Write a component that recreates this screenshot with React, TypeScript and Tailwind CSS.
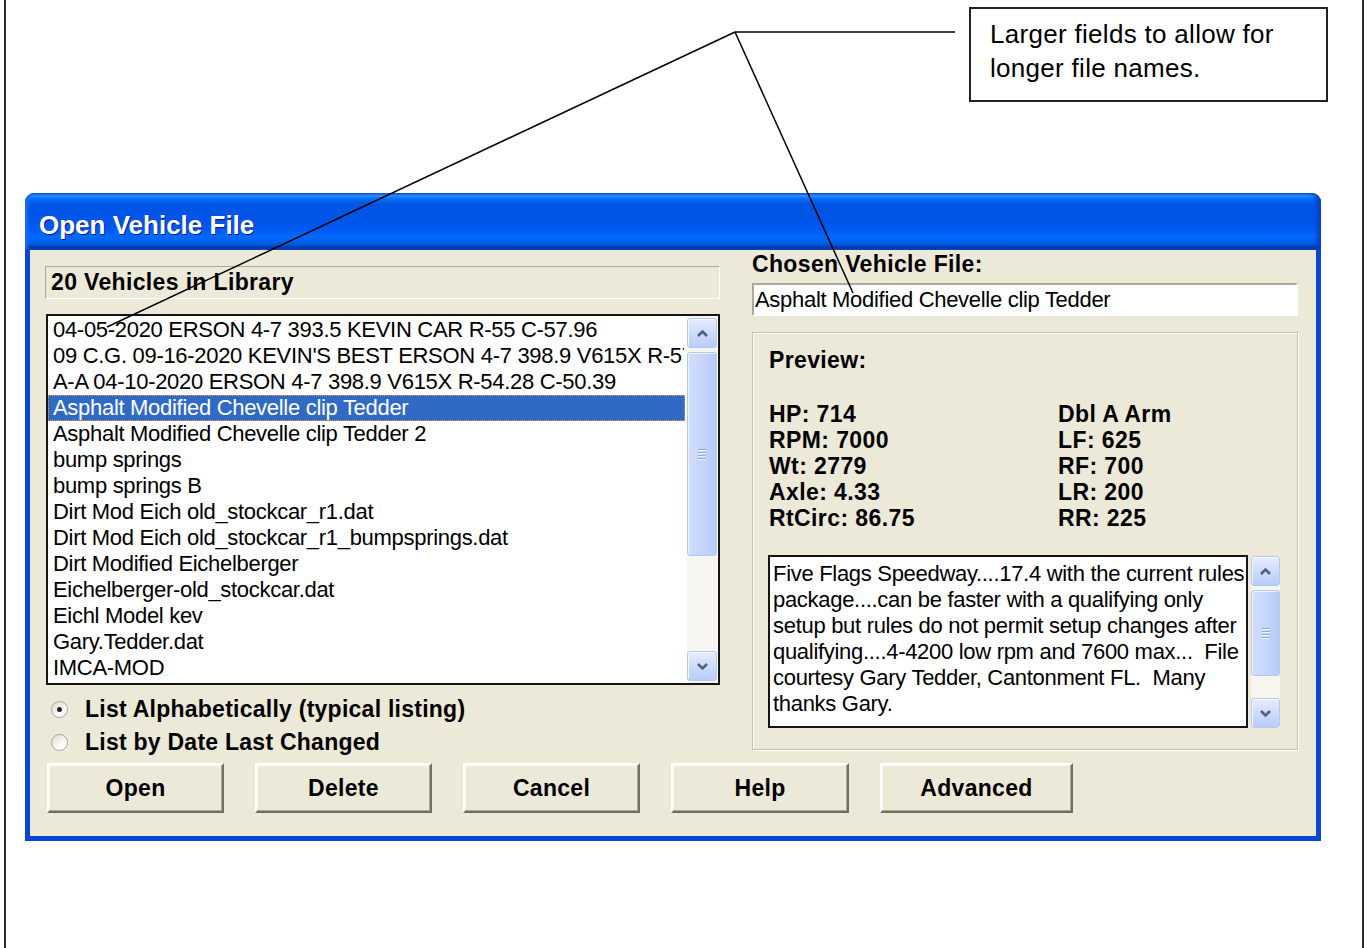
import React from "react";

const files = [
  "04-05-2020 ERSON 4-7 393.5 KEVIN CAR R-55 C-57.96",
  "09 C.G. 09-16-2020 KEVIN'S BEST ERSON 4-7 398.9 V615X R-57",
  "A-A 04-10-2020 ERSON 4-7 398.9 V615X R-54.28 C-50.39",
  "Asphalt Modified Chevelle clip Tedder",
  "Asphalt Modified Chevelle clip Tedder 2",
  "bump springs",
  "bump springs B",
  "Dirt Mod Eich old_stockcar_r1.dat",
  "Dirt Mod Eich old_stockcar_r1_bumpsprings.dat",
  "Dirt Modified Eichelberger",
  "Eichelberger-old_stockcar.dat",
  "Eichl Model kev",
  "Gary.Tedder.dat",
  "IMCA-MOD",
];

const selected = 3;

const specs = [
  ["HP: 714", "Dbl A Arm"],
  ["RPM: 7000", "LF: 625"],
  ["Wt: 2779", "RF: 700"],
  ["Axle: 4.33", "LR: 200"],
  ["RtCirc: 86.75", "RR: 225"],
];

const notes = [
  "Five Flags Speedway....17.4 with the current rules",
  "package....can be faster with a qualifying only",
  "setup but rules do not permit setup changes after",
  "qualifying....4-4200 low rpm and 7600 max...  File",
  "courtesy Gary Tedder, Cantonment FL.  Many",
  "thanks Gary.",
];

const buttons = [
  { label: "Open", w: "w-[177px]" },
  { label: "Delete", w: "w-[177px]" },
  { label: "Cancel", w: "w-[177px]" },
  { label: "Help", w: "w-[178px]" },
  { label: "Advanced", w: "w-[193px]" },
];

const Arrow = ({ dir }: { dir: "up" | "down" }) => (
  <div className="flex h-[30px] shrink-0 items-center justify-center rounded-[3px] border border-[#b4c8f6] bg-[linear-gradient(180deg,#e6edfd_0%,#cbdafc_55%,#b9cdf9_100%)] shadow-[inset_1px_1px_0_#f4f7fe]">
    <svg width="13" height="9" viewBox="0 0 13 9">
      <path
        d={dir === "up" ? "M2 7 6.5 2.5 11 7" : "M2 2 6.5 6.5 11 2"}
        fill="none"
        stroke="#4d6185"
        strokeWidth="2.6"
      />
    </svg>
  </div>
);

const Thumb = ({ className }: { className: string }) => (
  <div
    className={
      "flex flex-col items-center justify-center gap-[2px] rounded-[3px] border border-[#b4c8f6] bg-[linear-gradient(90deg,#d2defd_0%,#c3d4fb_60%,#b6cbf8_100%)] shadow-[inset_1px_1px_0_#eef3fe] " +
      className
    }
  >
    {[0, 1, 2, 3].map((i) => (
      <div key={i} className="h-[1px] w-[8px] bg-[#8eacef] shadow-[0_1px_0_#eef3fe]" />
    ))}
  </div>
);

export default function App() {
  return (
    <div className="relative h-[948px] w-[1368px] overflow-hidden bg-white px-[4px] font-['Liberation_Sans',Arial,sans-serif] text-black">
      <div className="h-full border-x-2 border-[#2a2a2a]">
        {/* callout */}
        <div className="flex justify-end pr-[34px] pt-[7px]">
          <div className="h-[95px] w-[359px] border-2 border-[#222] pl-[19px] pt-[8px] text-[26px] leading-[34px] tracking-[0.3px]">
            <div>Larger fields to allow for</div>
            <div>longer file names.</div>
          </div>
        </div>

        {/* dialog */}
        <div className="ml-[19px] mt-[91px] w-[1296px]">
          <div className="h-[57px] rounded-t-[9px] bg-[linear-gradient(180deg,#0058ee_0%,#3593ff_4%,#288eff_6%,#127dff_8%,#036ffc_10%,#0262ee_14%,#0057e5_20%,#0054e3_24%,#0055eb_56%,#005bf5_66%,#026afe_76%,#0062ef_86%,#0052d6_92%,#0040ab_94%,#003092_100%)] pl-[14px] pt-[20px] shadow-[inset_-4px_0_4px_#0b3ec0,inset_3px_0_3px_#1d6cf0]">
            <div className="text-[26px] font-bold leading-[25px] text-white [text-shadow:1px_1px_0_#0a1883]">
              Open Vehicle File
            </div>
          </div>

          <div className="border-x-[5px] border-b-[5px] border-[#0845d8] bg-[#ece9d8] pb-[23px]">
            <div className="flex pl-[15px]">
              {/* left column */}
              <div className="w-[675px] pt-[16px]">
                <div className="h-[33px] border border-b-white border-l-[#aca899] border-r-white border-t-[#aca899] pl-[5px] text-[23px] font-bold leading-[31px] tracking-[0.35px]">
                  20 Vehicles in Library
                </div>

                <div className="mt-[15px] ml-[1px] flex h-[371px] border-2 border-[#151515] bg-white">
                  <div className="mr-[2px] flex-1 overflow-hidden pt-[1px]">
                    {files.map((f, i) => (
                      <div
                        key={f}
                        className={
                          i === selected
                            ? "h-[26px] overflow-hidden whitespace-nowrap border border-dotted border-[#e9a23b] bg-[#316ac5] pl-[4px] text-[22px] leading-[24px] tracking-[-0.3px] text-white"
                            : "h-[26px] overflow-hidden whitespace-nowrap border border-transparent pl-[4px] text-[22px] leading-[24px] tracking-[-0.3px]"
                        }
                      >
                        {f}
                      </div>
                    ))}
                  </div>
                  <div className="mr-[1px] flex w-[30px] flex-col bg-[#f6f5f0] py-[2px]">
                    <Arrow dir="up" />
                    <Thumb className="mt-[4px] h-[204px]" />
                    <div className="flex-1" />
                    <Arrow dir="down" />
                  </div>
                </div>

                <div className="mt-[8px] pl-[6px] text-[23px] font-bold tracking-[0.25px]">
                  <div className="flex h-[33px] items-center gap-[17px] leading-[33px]">
                    <div className="flex h-[17px] w-[17px] items-center justify-center rounded-full border border-[#a9a698] bg-[linear-gradient(135deg,#dcd9cd_0%,#ffffff_70%)]">
                      <div className="h-[5px] w-[5px] rounded-full bg-[#222]" />
                    </div>
                    <span>List Alphabetically (typical listing)</span>
                  </div>
                  <div className="flex h-[33px] items-center gap-[17px] leading-[33px]">
                    <div className="h-[17px] w-[17px] rounded-full border border-[#a9a698] bg-[linear-gradient(135deg,#dcd9cd_0%,#ffffff_70%)]" />
                    <span>List by Date Last Changed</span>
                  </div>
                </div>
              </div>

              {/* right column */}
              <div className="ml-[32px] w-[546px] pt-[2px]">
                <div className="text-[23px] font-bold leading-[24px] tracking-[0.35px]">Chosen Vehicle File:</div>
                <div className="mt-[7px] h-[33px] overflow-hidden whitespace-nowrap border-2 border-b-white border-l-[#aca899] border-r-white border-t-[#aca899] bg-white pl-[1px] text-[22px] leading-[29px] tracking-[-0.3px]">
                  Asphalt Modified Chevelle clip Tedder
                </div>

                <div className="mt-[16px] h-[418px] border border-[#c5c2b2] px-[15px] pt-[15px] shadow-[inset_1px_1px_0_#ffffff,1px_1px_0_#ffffff]">
                  <div className="pl-[1px] text-[23px] font-bold leading-[24px] tracking-[0.35px]">Preview:</div>
                  <div className="mt-[29px] grid grid-cols-[289px_1fr] pl-[1px] text-[23px] font-bold leading-[26px] tracking-[0.4px]">
                    {specs.map(([a, b]) => (
                      <React.Fragment key={a}>
                        <div>{a}</div>
                        <div>{b}</div>
                      </React.Fragment>
                    ))}
                  </div>

                  <div className="mt-[24px] flex">
                    <div className="h-[173px] w-[480px] overflow-hidden border-2 border-[#151515] bg-white pl-[3px] pt-[4px] text-[22px] leading-[26px] tracking-[-0.3px]">
                      {notes.map((n) => (
                        <div key={n} className="overflow-hidden whitespace-pre">
                          {n}
                        </div>
                      ))}
                    </div>
                    <div className="ml-[3px] mt-[1px] flex h-[172px] w-[29px] flex-col bg-[#f6f5f0]">
                      <Arrow dir="up" />
                      <Thumb className="mt-[4px] h-[86px]" />
                      <div className="flex-1" />
                      <Arrow dir="down" />
                    </div>
                  </div>
                </div>
              </div>
            </div>

            {/* buttons */}
            <div className="mt-[4px] flex gap-[31px] pl-[17px]">
              {buttons.map((b) => (
                <button
                  key={b.label}
                  className={
                    "h-[50px] border-2 border-b-[#716f64] border-l-white border-r-[#716f64] border-t-white bg-[#ece9d8] text-[23px] font-bold tracking-[0.3px] shadow-[inset_-1px_-1px_0_#aca899,inset_1px_1px_0_#f8f7f2] " +
                    b.w
                  }
                >
                  {b.label}
                </button>
              ))}
            </div>
          </div>
        </div>
      </div>

      {/* leader lines from the callout */}
      <svg className="pointer-events-none absolute inset-0" width="1368" height="948">
        <g stroke="#000" strokeWidth="1.5" fill="none">
          <line x1="735" y1="32" x2="955" y2="32" />
          <line x1="735" y1="32" x2="107" y2="327" />
          <line x1="735" y1="32" x2="853" y2="293" />
        </g>
      </svg>
    </div>
  );
}
